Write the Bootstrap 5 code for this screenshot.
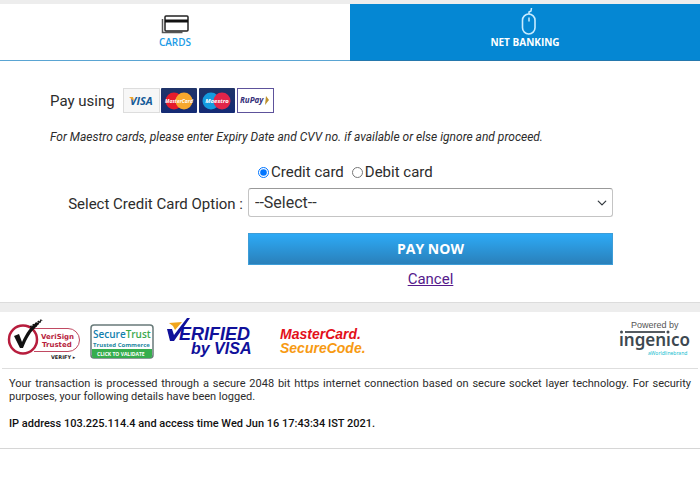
<!DOCTYPE html>
<html lang="en">
<head>
<meta charset="utf-8">
<meta name="viewport" content="width=device-width, initial-scale=1">
<title>Payment</title>
<link href="https://cdn.jsdelivr.net/npm/bootstrap@5.3.0/dist/css/bootstrap.min.css" rel="stylesheet">
<style>
body{font-family:Roboto,"Liberation Sans",sans-serif;font-size:15px;line-height:20px;color:#2c2c2c;background:#fff}
.pay-tabs{border-top:4px solid #ededed}
.pay-tab{height:57px;border:0;border-bottom:1px solid #5aa5d3;border-radius:0;padding:4px 0 0;font:600 10px/14px "Open Sans",sans-serif;background:#fff;color:#1c9be6}
.pay-tab.is-blue{background:#0587d3;color:#fff;font-weight:700;border-bottom-color:#2478ad}
.pay-tab svg{display:block;margin:0 auto}
.pay-intro{padding:27px 50px 0}
.pay-note{font-size:12px;line-height:16px;font-style:italic;margin:16px 0 0}
.pay-form{display:grid;grid-template-columns:248fr 365fr 87fr;padding-bottom:13px;margin-top:16px}
.pay-mid{grid-column:2}
.pay-radios{padding-left:10px;height:22px}
.pay-radios input{width:11px;height:11px;margin:0 2px 0 0}
.pay-label{grid-column:1;padding:11px 5px 0 0;text-align:right;white-space:nowrap}
.pay-select{height:29px;padding:0 24px 0 6px;margin-top:5px;font-size:16px;line-height:20px;border:1px solid #c4c4c4;border-top-color:#999;border-radius:3px;color:#333;background-position:right 5px center;background-size:10px 10px}
.pay-go{height:32px;margin-top:16px;padding:0;border:1px solid #3d9dd8;border-radius:0;background:linear-gradient(#2daaf6,#2a80ba);color:#fff;font:700 14px/20px "Open Sans",sans-serif}
.pay-go:hover{background:#2a80ba;color:#fff}
.pay-cancel{color:#551a8b;margin-top:4px}
.grey-band{height:10px;background:#ededed;border-top:1px solid #dcdcdc}
.seal-row{height:57px;margin:0 2px;border-bottom:1px solid #dedede}
.seal-group{margin-left:4px}
.seal-row svg,.brands svg{display:block;flex:none}
.legal{padding:8px 9px 18px;font-size:11px;line-height:13px;border-bottom:1px solid #d6d6d6}
.legal p{margin:0 0 14px;text-align:justify}
.legal .logged{margin:0;color:#111;font-weight:500}
</style>
<script src="https://cdn.jsdelivr.net/npm/bootstrap@5.3.0/dist/js/bootstrap.bundle.min.js"></script>
</head>
<body>
<nav class="pay-tabs d-flex" aria-label="Payment method">
  <button type="button" class="pay-tab w-50 d-flex flex-column align-items-center">
    <svg width="30" height="27" viewBox="0 0 30 27"><path d="M2.500 11v13.500h20" fill="none" stroke="#555" stroke-width="1.500"/><rect x="5" y="8" width="23" height="15" rx="1" fill="#fff" stroke="#222" stroke-width="1.500"/><path d="M5 13h23" stroke="#111" stroke-width="3"/></svg>
    CARDS
  </button>
  <button type="button" class="pay-tab is-blue w-50 d-flex flex-column align-items-center">
    <svg width="24" height="27" viewBox="0 0 24 27" fill="none" stroke="#c9ecff"><rect x="9.500" y="6" width="12.500" height="20" rx="6.2" stroke-width="1.600"/><path d="M16 6V4l2-1 .5-3M16 9.500v4" stroke-width="1.500"/></svg>
    NET BANKING
  </button>
</nav>
<main>
  <section class="pay-intro">
    <div class="d-flex align-items-center">
      <span class="me-2">Pay using</span>
      <div class="brands d-flex">
        <svg width="152" height="25" viewBox="0 0 152 25" role="img" aria-label="Accepted cards" font-family="Open Sans,sans-serif" font-weight="bold" font-style="italic">
          <defs><linearGradient id="navy" x2="0" y2="1"><stop stop-color="#203468"/><stop offset="1" stop-color="#142b75"/></linearGradient></defs>
          <rect x=".5" y=".5" width="36" height="24" fill="#f7f7f7" stroke="#ddd"/><text x="7" y="17" font-size="11" fill="#155b98">VISA</text><path d="M6 9h4l1 4z" fill="#efa52c"/>
          <rect x="38" width="36" height="25" rx="1" fill="url(#navy)"/><circle cx="51" cy="13" r="8.500" fill="#e51b2b"/><circle cx="61" cy="13" r="8.500" fill="#f7a72d"/><text x="56" y="15" font-size="5" fill="#fff" text-anchor="middle">MasterCard</text>
          <rect x="76" width="36" height="25" rx="1" fill="url(#navy)"/><circle cx="88" cy="13" r="8.500" fill="#149bdf"/><circle cx="99" cy="13" r="8.500" fill="#e32449"/><text x="94" y="15" font-size="6" fill="#fff" text-anchor="middle">Maestro</text>
          <rect x="114.500" y=".5" width="36" height="24" fill="#fff" stroke="#5d529b"/><text x="117" y="15" font-size="8" fill="#342f79">RuPay</text><path d="M143 8l3 4-4 5z" fill="#bd912d"/>
        </svg>
      </div>
    </div>
    <p class="pay-note">For Maestro cards, please enter Expiry Date and CVV no. if available or else ignore and proceed.</p>
  </section>
  <form class="pay-form">
    <div class="pay-mid pay-radios d-flex align-items-center">
      <input type="radio" name="kind" id="credit" checked><label for="credit">Credit card</label>
      <input class="ms-2" type="radio" name="kind" id="debit"><label for="debit">Debit card</label>
    </div>
    <label for="option" class="pay-label">Select Credit Card Option :</label>
    <div><select id="option" class="form-select pay-select"><option>--Select--</option></select></div>
    <div class="pay-mid text-center">
      <button type="button" class="btn pay-go d-block w-100">PAY NOW</button>
      <a href="#" class="pay-cancel d-inline-block">Cancel</a>
    </div>
  </form>
</main>
<div class="grey-band"></div>
<footer>
  <div class="seal-row d-flex justify-content-between">
    <div class="seal-group d-flex">
      <svg width="370" height="55" viewBox="6 312 370 55" role="img" aria-label="Security seals" font-family="Open Sans,sans-serif" font-weight="bold">
        <path d="M34 328.500h34a11.500 11.500 0 0 1 0 23H34" fill="#fff" stroke="#c04a62"/>
        <circle cx="23" cy="339.500" r="14" fill="#fff" stroke="#b71d3d" stroke-width="2.500"/>
        <path d="M14 336l5-2 3 8c4-9 9-16 14-19l4-1-3 4c-6 5-10 12-14 22h-3z" fill="#111"/>
        <path d="M30 327l11-7M33 329l9-9" stroke="#111" stroke-width="1.500" stroke-dasharray="2 1"/>
        <g font-family="DejaVu Sans,sans-serif" fill="#b71d3d" font-size="7"><text x="41" y="339">VeriSign</text><text x="42" y="347">Trusted</text><text x="51" y="359" font-size="5" fill="#222">VERIFY ▸</text></g>
        <rect x="91" y="325" width="62" height="33" rx="3" fill="#fff" stroke="#687a79" stroke-width="1.500"/><path d="M92 349h60v7q0 2-2 2H94q-2 0-2-2z" fill="#36ad4d"/>
        <text x="93" y="338" font-size="10" font-weight="600" fill="#127fae">Secure<tspan fill="#3aa94d">Trust</tspan></text>
        <text x="93" y="347" font-size="6" fill="#2387a2">Trusted Commerce</text><text x="97" y="356" font-size="5" fill="#fff">CLICK TO VALIDATE</text>
        <g font-family="Liberation Sans,Arial,sans-serif" font-style="italic">
          <text x="179" y="340" font-size="18" fill="#10109a">ERIFIED</text><text x="191" y="354" font-size="16" fill="#10109a">by VISA</text>
          <text x="280" y="339" font-size="14" fill="#e3101b">MasterCard.</text><text x="280" y="353" font-size="14" fill="#f79a12">SecureCode.</text>
        </g>
        <path d="M167 329h5l2 6 13-17h3l-16 23h-4z" fill="#10109a"/><path d="M169 323l13-1-7 8-2-4z" fill="#f0a51d"/>
      </svg>
    </div>
    <svg width="82" height="55" viewBox="616 312 82 55" role="img" aria-label="Powered by ingenico">
      <text x="631" y="328" font-family="Liberation Sans,sans-serif" font-size="9" fill="#555">Powered by</text>
      <path d="M625 332h40" stroke="#555b61" stroke-width="2"/><circle cx="621.500" cy="332" r="1.500" fill="#444b52"/><circle cx="668" cy="332" r="1.500" fill="#444b52"/>
      <text x="619" y="346" font-family="Noto Sans,sans-serif" font-weight="600" font-size="17" fill="#3d4850">ıngenıco</text>
      <text x="648" y="355" font-family="Noto Sans,sans-serif" font-size="5" fill="#16bdcf">aWorldlinebrand</text>
    </svg>
  </div>
  <div class="legal">
    <p>Your transaction is processed through a secure 2048 bit https internet connection based on secure socket layer technology. For security purposes, your following details have been logged.</p>
    <p class="logged">IP address 103.225.114.4 and access time Wed Jun 16 17:43:34 IST 2021.</p>
  </div>
</footer>
</body>
</html>
